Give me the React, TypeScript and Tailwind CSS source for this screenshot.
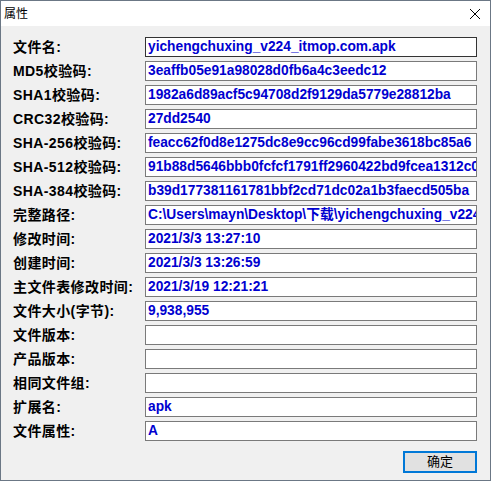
import React from "react";

type Row = { label: string; value: string };

const rows: Row[] = [
  { label: "文件名:", value: "yichengchuxing_v224_itmop.com.apk" },
  { label: "MD5校验码:", value: "3eaffb05e91a98028d0fb6a4c3eedc12" },
  { label: "SHA1校验码:", value: "1982a6d89acf5c94708d2f9129da5779e28812ba" },
  { label: "CRC32校验码:", value: "27dd2540" },
  { label: "SHA-256校验码:", value: "feacc62f0d8e1275dc8e9cc96cd99fabe3618bc85a6" },
  { label: "SHA-512校验码:", value: "91b88d5646bbb0fcfcf1791ff2960422bd9fcea1312c0" },
  { label: "SHA-384校验码:", value: "b39d177381161781bbf2cd71dc02a1b3faecd505ba" },
  { label: "完整路径:", value: "C:\\Users\\mayn\\Desktop\\下载\\yichengchuxing_v224_itmop.com.apk" },
  { label: "修改时间:", value: "2021/3/3 13:27:10" },
  { label: "创建时间:", value: "2021/3/3 13:26:59" },
  { label: "主文件表修改时间:", value: "2021/3/19 12:21:21" },
  { label: "文件大小(字节):", value: "9,938,955" },
  { label: "文件版本:", value: "" },
  { label: "产品版本:", value: "" },
  { label: "相同文件组:", value: "" },
  { label: "扩展名:", value: "apk" },
  { label: "文件属性:", value: "A" },
];

const font = "font-['Liberation_Sans','Noto_Sans_CJK_SC',sans-serif]";

export default function App() {
  return (
    <div className={`flex h-[481px] w-[491px] flex-col border border-[#6b7785] bg-[#f0f0f0] ${font}`}>
      <div className="flex h-[25px] shrink-0 items-center justify-between bg-white pl-[3px] pr-[8px]">
        <span className="text-[12px] text-black">属性</span>
        <svg width="12" height="12" viewBox="0 0 12 12" className="mr-[1px]">
          <path d="M1 1 L11 11 M11 1 L1 11" stroke="#000" strokeWidth="1" />
        </svg>
      </div>

      <div className="flex flex-col gap-[4px] pl-[12px] pt-[11px]">
        {rows.map((r, i) => (
          <div key={r.label} className="flex h-[20px] items-center">
            <div className="w-[132px] text-[14px] font-bold tracking-[0.4px] text-black">{r.label}</div>
            <div
              className={`flex h-[20px] w-[332px] items-center overflow-hidden whitespace-nowrap border bg-white pl-[2px] text-[13.75px] font-bold text-[#0000d0] ${
                i === 0 ? "border-[#333]" : "border-[#7a7a7a]"
              }`}
            >
              {r.value}
            </div>
          </div>
        ))}
      </div>

      <div className="flex justify-end pr-[13px] pt-[10px]">
        <button
          type="button"
          className="flex h-[22px] w-[74px] items-center justify-center border-2 border-[#0078d7] bg-[#e1e1e1] text-[13px] text-black"
        >
          确定
        </button>
      </div>
    </div>
  );
}
